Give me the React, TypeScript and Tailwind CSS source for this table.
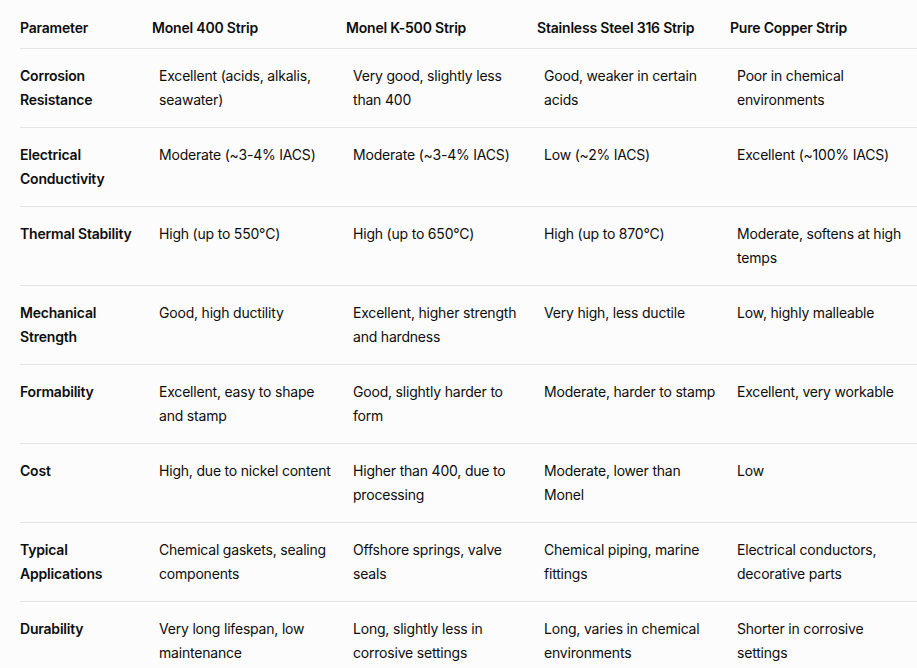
const header = [
  "Parameter",
  "Monel 400 Strip",
  "Monel K-500 Strip",
  "Stainless Steel 316 Strip",
  "Pure Copper Strip",
];

const rows: string[][] = [
  [
    "Corrosion Resistance",
    "Excellent (acids, alkalis, seawater)",
    "Very good, slightly less than 400",
    "Good, weaker in certain acids",
    "Poor in chemical environments",
  ],
  [
    "Electrical Conductivity",
    "Moderate (~3-4% IACS)",
    "Moderate (~3-4% IACS)",
    "Low (~2% IACS)",
    "Excellent (~100% IACS)",
  ],
  [
    "Thermal Stability",
    "High (up to 550°C)",
    "High (up to 650°C)",
    "High (up to 870°C)",
    "Moderate, softens at high temps",
  ],
  [
    "Mechanical Strength",
    "Good, high ductility",
    "Excellent, higher strength and hardness",
    "Very high, less ductile",
    "Low, highly malleable",
  ],
  [
    "Formability",
    "Excellent, easy to shape and stamp",
    "Good, slightly harder to form",
    "Moderate, harder to stamp",
    "Excellent, very workable",
  ],
  [
    "Cost",
    "High, due to nickel content",
    "Higher than 400, due to processing",
    "Moderate, lower than Monel",
    "Low",
  ],
  [
    "Typical Applications",
    "Chemical gaskets, sealing components",
    "Offshore springs, valve seals",
    "Chemical piping, marine fittings",
    "Electrical conductors, decorative parts",
  ],
  [
    "Durability",
    "Very long lifespan, low maintenance",
    "Long, slightly less in corrosive settings",
    "Long, varies in chemical environments",
    "Shorter in corrosive settings",
  ],
];

const cols = "grid grid-cols-[132px_194px_191px_193px_190px]";

// body cell padding per column
const cellPad = ["pr-4 font-semibold", "pl-[7px] pr-1", "pl-[7px] pr-1", "pl-[7px] pr-3", "pl-[7px] pr-1"];

export default function App() {
  return (
    <div className="h-[668px] w-[917px] overflow-hidden bg-[#fcfcfc] font-['Inter',sans-serif] text-[14px] leading-6 tracking-[-0.2px] text-[#0d0d0d]">
      <div className="ml-5 w-[960px]">
        <div className={`${cols} border-b border-[#e5e5e5] pt-4 pb-2 font-semibold`}>
          {header.map((h) => (
            <div key={h} className="pr-2">
              {h}
            </div>
          ))}
        </div>
        {rows.map((r) => (
          <div key={r[0]} className={`${cols} border-b border-[#e5e5e5] py-[15px]`}>
            {r.map((c, i) => (
              <div key={i} className={cellPad[i]}>
                {c}
              </div>
            ))}
          </div>
        ))}
      </div>
    </div>
  );
}
